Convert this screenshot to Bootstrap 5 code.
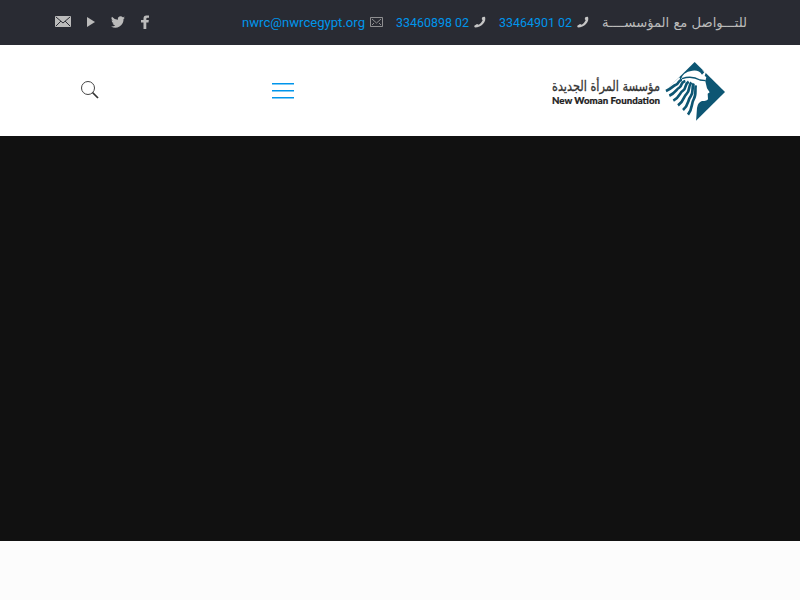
<!DOCTYPE html>
<html lang="ar" dir="rtl">
<head>
<meta charset="utf-8">
<meta name="viewport" content="width=device-width, initial-scale=1">
<title>مؤسسة المرأة الجديدة</title>
<link rel="stylesheet" href="https://cdn.jsdelivr.net/npm/bootstrap@5.3.0/dist/css/bootstrap.min.css">
<style>
body{background:#fcfcfc;font-family:Roboto,"DejaVu Sans",sans-serif;overflow:hidden}
a{color:#0095eb;text-decoration:none}
svg{display:block;flex:none;overflow:visible}
.wrap{width:700px;margin:0 auto}
.topbar{height:45px;padding-bottom:2px;background:#292b33;color:#bbb;font-size:13px;line-height:20px}
.contact-list{padding-right:3px}
.slogan{width:145px;margin-left:13px}
.phone{width:94px;margin-left:9px}
.phone a{margin-right:3px}
.social{padding-left:5px}
.site-head{height:91px;background:#fff}
.hero{height:405px;background:#111}
.brand{margin-right:25px}
.burger{margin-right:256px}
.finder{margin-left:30px;margin-top:-1px}
.social svg+svg{margin-right:15px}
.social svg:last-child{margin-right:16px}
</style>
</head>
<body>
<header>
<div class="topbar">
<div class="wrap h-100 d-flex justify-content-between align-items-center">
<ul class="contact-list list-unstyled d-flex align-items-center m-0">
<li class="slogan"><svg width="145" height="24" direction="rtl"><text x="145" y="17" font-family="DejaVu Sans" font-size="13" fill="#bbb" textLength="145" lengthAdjust="spacingAndGlyphs">للتـــواصل مع المؤسســــة</text></svg></li>
<li class="phone d-flex align-items-center"><svg width="12" height="12" viewBox="0 0 12 12"><path d="M8.500 1 11 .7Q12.200 4.500 9 7.900T1 11.400Q0 11 .3 9.800L3 8l1.800.8Q7.300 7.200 8.700 4.300L7.700 3.100Z" fill="#c5c5c5"/></svg><a href="#"><svg width="76" height="22" direction="ltr"><text x="1" y="16" font-size="13.400" textLength="73" lengthAdjust="spacingAndGlyphs" fill="#0095eb">33464901 02</text></svg></a></li>
<li class="phone d-flex align-items-center"><svg width="12" height="12" viewBox="0 0 12 12"><path d="M8.500 1 11 .7Q12.200 4.500 9 7.900T1 11.400Q0 11 .3 9.800L3 8l1.800.8Q7.300 7.200 8.700 4.300L7.700 3.100Z" fill="#c5c5c5"/></svg><a href="#"><svg width="76" height="22" direction="ltr"><text x="1" y="16" font-size="13.400" textLength="73" lengthAdjust="spacingAndGlyphs" fill="#0095eb">33460898 02</text></svg></a></li>
<li class="email d-flex align-items-center"><svg class="ms-1" width="14" height="10" viewBox="0 0 14 10"><path d="M1.500.5h12v9h-12ZM3 2l4.500 4L12 2M3 8l2-2M12 8l-2-2" fill="none" stroke="#aaa" stroke-width=".8"/></svg><a href="#"><svg width="124" height="22" direction="ltr"><text x="1" y="16" font-size="13.400" textLength="123" lengthAdjust="spacingAndGlyphs" fill="#0095eb">nwrc@nwrcegypt.org</text></svg></a></li>
</ul>
<div class="social d-flex align-items-center">
<svg width="10" height="14" viewBox="0 0 10 14"><path d="M3.500 14V7.400H1V4.900h2.500V3.500Q3.500 .4 6.300 .4H9v2.400H7.300Q6.300 2.800 6.300 4v.9h2.500l-.3 2.500H6.300V14Z" fill="#bbb"/></svg>
<svg width="14" height="12" viewBox="0 0 24 20"><path d="M24 2.500a10 10 0 0 1-2.800.8A5 5 0 0 0 23.300.6a10 10 0 0 1-3.100 1.200A4.900 4.900 0 0 0 11.800 6.300A14 14 0 0 1 1.700 1.100a4.900 4.900 0 0 0 1.500 6.600 5 5 0 0 1-2.200-.6 4.900 4.900 0 0 0 3.900 4.900 5 5 0 0 1-2.200.1 4.900 4.900 0 0 0 4.600 3.400A10 10 0 0 1 0 17.500 14 14 0 0 0 21.500 5Z" fill="#bbb"/></svg>
<svg width="9" height="10"><path d="M0 0 8 5 0 10Z" fill="#bbb"/></svg>
<svg width="16" height="11" viewBox="0 0 16 11"><rect width="16" height="11" rx="1" fill="#bbb"/><path d="m1 1 7 6 7-6M1 10l5-5M15 10l-5-5" fill="none" stroke="#292b33"/></svg>
</div>
</div>
</div>
<div class="site-head">
<div class="wrap h-100 d-flex align-items-center">
<a class="brand" href="#">
<svg width="175" height="66" viewBox="0 0 175 66" direction="ltr">
<text x="2" y="33" font-family="DejaVu Sans" font-size="14" textLength="108" lengthAdjust="spacingAndGlyphs" fill="#333" stroke="#333" stroke-width=".3">مؤسسة المرأة الجديدة</text>
<text x="2" y="46" font-family="Lato" font-weight="900" font-size="10" textLength="108" lengthAdjust="spacingAndGlyphs" fill="#222" stroke="#222" stroke-width=".2">New Woman Foundation</text>
<g transform="translate(110 0) scale(.33333)">
<path d="M104 12 195 102 108 188 15 100Z" fill="#0d5673"/>
<path d="M62 66Q67 42 97 38Q117 35 126 50L133 43 126 36 138 42 134 54 139 57 136 70 141 91 149 103 143 107 144 123Q142 129 126 129 113 133 111 150L108 192 60 145 12 100 58 58Z" fill="#fff"/>
<g fill="none" stroke="#0d5673" stroke-width="8">
<path d="M66 66C54 66 57 77 48 80S36 91 18 99"/>
<path d="M76 69C60 73 68 84 58 89S48 104 28 113"/>
<path d="M86 71C72 80 80 92 69 98S61 117 40 128"/>
<path d="M94 73C83 87 91 98 80 107S75 127 54 142"/>
<path d="M101 76C94 91 102 103 92 115S88 139 69 156"/>
<path d="M107 82C105 100 109 111 101 124S99 151 84 170"/>
</g>
<path d="M66 62Q95 52 120 66L137 68" fill="none" stroke="#0d5673" stroke-width="4"/>
</g>
</svg></a>
<a class="burger" href="#"><svg width="22" height="16"><path d="M0 .7h22M0 7.700h22M0 14.700h22" stroke="#0095eb" stroke-width="1.400"/></svg></a>
<a class="finder me-auto" href="#"><svg width="19" height="19" viewBox="0 0 19 19"><circle cx="8" cy="7" r="6.500" fill="none" stroke="#444"/><path d="m12.500 11.500 5.500 5.500" stroke="#333" stroke-width="1.700"/></svg></a>
</div>
</div>
</header>
<main class="hero"></main>
<script src="https://cdn.jsdelivr.net/npm/bootstrap@5.3.0/dist/js/bootstrap.bundle.min.js"></script>
</body>
</html>
